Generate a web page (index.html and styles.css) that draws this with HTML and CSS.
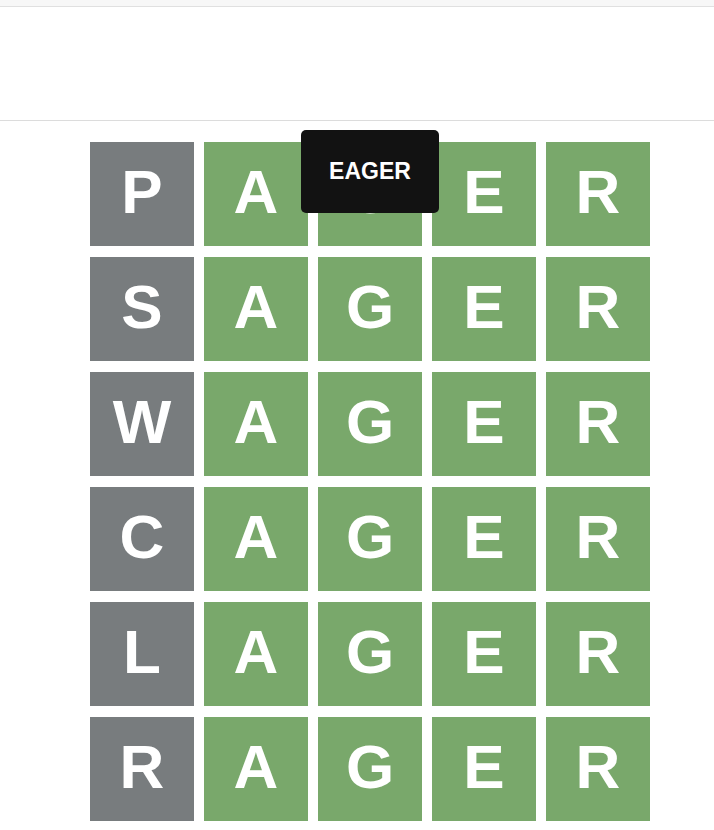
FILE: index.html
```html
<!DOCTYPE html>
<html lang="en">
<head>
<meta charset="utf-8">
<title>Wordle board</title>
<link rel="stylesheet" href="styles.css">
</head>
<body>
<div class="topbar"></div>
<header class="header"></header>
<main class="board-wrap">
  <div class="board">
    <div class="tooltip">EAGER</div>
    <div class="row"><div class="tile absent">P</div><div class="tile correct">A</div><div class="tile correct">G</div><div class="tile correct">E</div><div class="tile correct">R</div></div>
    <div class="row"><div class="tile absent">S</div><div class="tile correct">A</div><div class="tile correct">G</div><div class="tile correct">E</div><div class="tile correct">R</div></div>
    <div class="row"><div class="tile absent">W</div><div class="tile correct">A</div><div class="tile correct">G</div><div class="tile correct">E</div><div class="tile correct">R</div></div>
    <div class="row"><div class="tile absent">C</div><div class="tile correct">A</div><div class="tile correct">G</div><div class="tile correct">E</div><div class="tile correct">R</div></div>
    <div class="row"><div class="tile absent">L</div><div class="tile correct">A</div><div class="tile correct">G</div><div class="tile correct">E</div><div class="tile correct">R</div></div>
    <div class="row"><div class="tile absent">R</div><div class="tile correct">A</div><div class="tile correct">G</div><div class="tile correct">E</div><div class="tile correct">R</div></div>
  </div>
</main>
</body>
</html>
```
FILE: styles.css
```css
html, body {
  margin: 0;
  padding: 0;
  background: #ffffff;
  font-family: "Liberation Sans", Arial, sans-serif;
  overflow: hidden;
}
.topbar {
  height: 6px;
  background: #f7f7f7;
  border-bottom: 1px solid #e0e0e0;
}
.header {
  height: 113px;
  background: #ffffff;
  border-bottom: 1px solid #dcdcdc;
}
.board-wrap {
  padding: 21px 0 0 90px;
}
.board {
  position: relative;
  display: flex;
  flex-direction: column;
  gap: 11px;
  width: 560px;
}
.row {
  display: flex;
  gap: 10px;
}
.tile {
  width: 104px;
  height: 104px;
  box-sizing: border-box;
  padding-bottom: 4px;
  display: flex;
  align-items: center;
  justify-content: center;
  color: #ffffff;
  font-weight: 700;
  font-size: 62px;
  line-height: 1;
}
.absent { background: #787c7e; }
.correct { background: #79a86b; }
.tooltip {
  position: absolute;
  left: 211px;
  top: -12px;
  width: 138px;
  height: 83px;
  background: #121212;
  border-radius: 5px;
  color: #ffffff;
  font-weight: 700;
  font-size: 23px;
  display: flex;
  align-items: center;
  justify-content: center;
  z-index: 2;
}
```
